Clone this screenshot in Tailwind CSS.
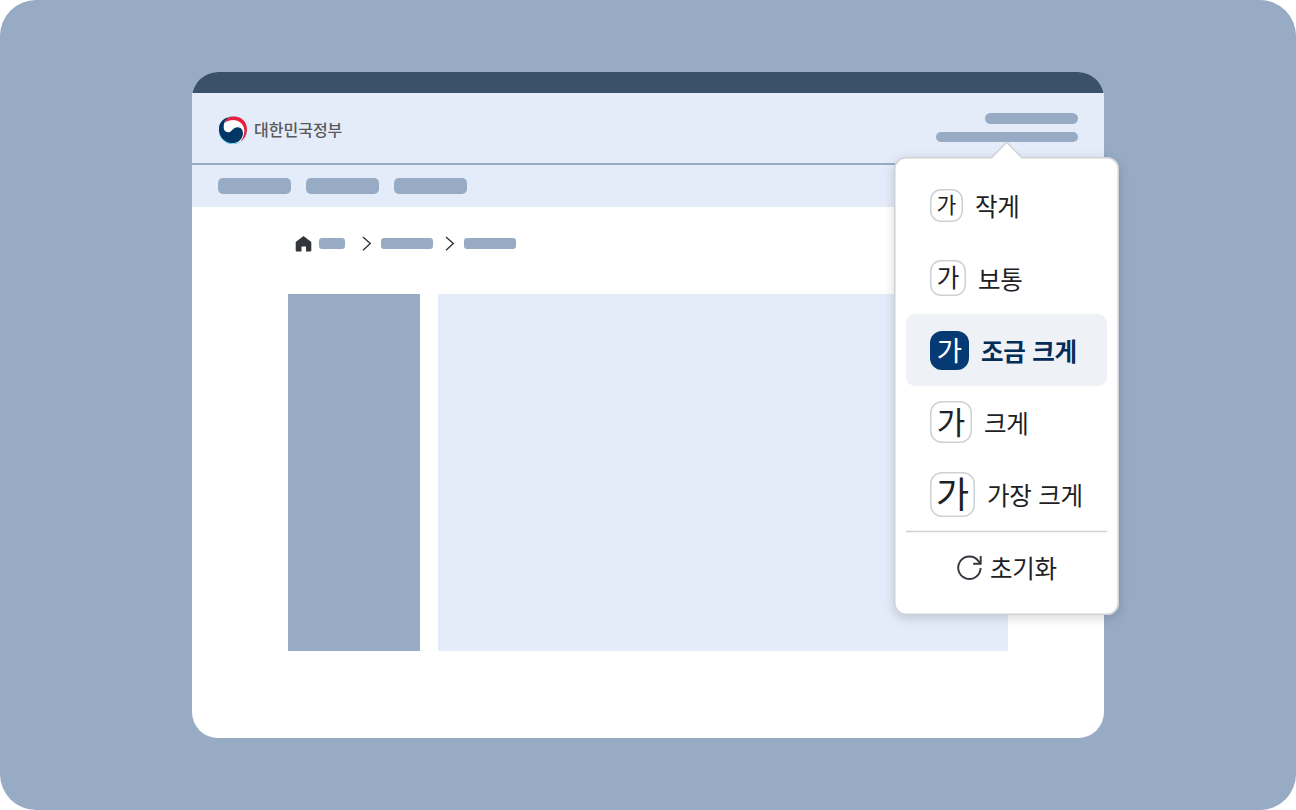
<!DOCTYPE html>
<html lang="ko">
<head>
<meta charset="utf-8">
<title>글자 크기 설정</title>
<script src="https://cdn.jsdelivr.net/npm/@tailwindcss/browser@4"></script>
</head>
<body class="bg-white font-['Noto_Sans_CJK_KR',sans-serif] text-[#1e2124]">
<div class="relative h-[810px] w-[1296px] overflow-hidden rounded-[36px] bg-[#98abc5] pt-18">
  <main class="mx-auto flex h-[666px] w-[912px] flex-col overflow-hidden rounded-[26px] bg-white">
    <div class="h-[21px] shrink-0 bg-[#3a506b]"></div>
    <header class="flex h-[72px] shrink-0 items-start justify-between border-b-2 border-[#98abc5] bg-[#e4ebf9] px-[26px]">
      <div class="flex items-center gap-[7px] pt-[22px]">
        <svg class="size-[29px]" viewBox="0 0 29 29">
          <circle cx="14.900" cy="15.200" r="14" fill="#32b4df"/>
          <circle cx="15.500" cy="15" r="13.400" fill="#fff"/>
          <path d="M8 4C15-1 29 1.500 29 15 28.700 20 26 24.500 22.500 26.500 27.500 20 27.500 12 23 8 18.500 4.300 12 4 7 8Z" fill="#e6213f"/>
          <path d="M10 2.600C2 5-.5 12 1.800 19 5 27.500 14 30 20.500 26.500 25.800 23 26.300 15.500 22.500 13 19 11 15.500 13.500 13.500 15.700 11 18.500 6.500 17.500 5.800 13.500 5.300 9.500 6.500 6 10 2.600Z" fill="#003764"/>
        </svg>
        <span class="text-[16px] font-medium leading-[24px] text-[#58595b] -mt-[2px]">대한민국정부</span>
      </div>
      <div class="flex flex-col items-end gap-2 pt-[20px]">
        <i class="h-[10.500px] w-[93px] rounded-full bg-[#98abc5]"></i>
        <i class="h-[10.500px] w-[142.500px] rounded-full bg-[#98abc5]"></i>
      </div>
    </header>
    <nav class="flex h-[42px] shrink-0 items-center gap-[15.500px] bg-[#e4ebf9] px-[26px]">
      <i class="h-[15.500px] w-[72.500px] rounded-[5px] bg-[#98abc5]"></i>
      <i class="h-[15.500px] w-[72.500px] rounded-[5px] bg-[#98abc5]"></i>
      <i class="h-[15.500px] w-[72.500px] rounded-[5px] bg-[#98abc5]"></i>
    </nav>
    <div class="flex h-[87px] shrink-0 items-start pl-[103px] pt-[28px]">
      <svg class="size-[17px]" viewBox="0 0 17 17"><path d="M8.500 1 16.300 7V15.500Q16.300 16.500 15.300 16.500H11V11.500H6.500V16.500H1.700Q.7 16.500.7 15.500V7Z" fill="#33363d"/></svg>
      <i class="ml-[7px] mt-[3px] h-[10.500px] w-[26px] rounded-[3px] bg-[#98abc5]"></i>
      <svg class="ml-[16px] mt-[1px] h-[15px] w-[12px]" viewBox="0 0 12 15" fill="none" stroke="#33363d" stroke-width="1.400"><path d="m2 1 7.300 6.600L2 14.200"/></svg>
      <i class="ml-[8px] mt-[3px] h-[10.500px] w-[52px] rounded-[3px] bg-[#98abc5]"></i>
      <svg class="ml-[11px] mt-[1px] h-[15px] w-[12px]" viewBox="0 0 12 15" fill="none" stroke="#33363d" stroke-width="1.400"><path d="m2 1 7.300 6.600L2 14.200"/></svg>
      <i class="ml-[8px] mt-[3px] h-[10.500px] w-[52px] rounded-[3px] bg-[#98abc5]"></i>
    </div>
    <section class="flex h-[357px] shrink-0 gap-[18px] px-24">
      <div class="w-[132px] bg-[#98abc5]"></div>
      <div class="flex-1 bg-[#e4ebf9]"></div>
    </section>
  </main>

  <div class="absolute left-[894px] top-[157px] h-[458px] w-[225px] rounded-[12px] bg-white px-[12px] pt-[13px] text-[24.500px] leading-[36px] tracking-[-0.250px] shadow-[inset_0_0_0_1.500px_#cdd1d5,0_3px_12px_rgba(0,0,0,0.16)]">
    <svg class="absolute left-[96px] -top-[16px] h-[18px] w-[34px]" viewBox="0 0 34 18"><path d="M1.500 16.500 16.700 1.200 32 16.500V18H1.500Z" fill="#fff"/><path d="M1.200 17 16.700 1.200 32.200 17" fill="none" stroke="#cdd1d5" stroke-width="1.500"/></svg>
    <div class="flex h-18 items-center gap-3 pl-6"><span class="flex size-[33px] items-center justify-center rounded-[11px] pb-1 text-[21.500px] tracking-normal shadow-[inset_0_0_0_1.500px_#cdd1d5] -mt-px">가</span><span>작게</span></div>
    <div class="flex h-18 items-center gap-3 pl-6"><span class="flex size-[36px] items-center justify-center rounded-[11px] pb-[2px] text-[24.500px] tracking-normal shadow-[inset_0_0_0_1.500px_#cdd1d5]">가</span><span class="pt-[2px]">보통</span></div>
    <div class="flex h-18 items-center gap-3 rounded-[9px] bg-[#eef2f7] pl-6 font-bold text-[#052b57]"><span class="flex size-[39px] items-center justify-center rounded-[12px] bg-[#063a74] pb-[3px] text-[27.500px] font-normal tracking-normal text-white">가</span><span class="pt-[2px]">조금 크게</span></div>
    <div class="flex h-18 items-center gap-3 pl-6"><span class="flex size-[42px] items-center justify-center rounded-[12px] pb-[3px] text-[31px] tracking-normal shadow-[inset_0_0_0_1.500px_#cdd1d5]">가</span><span class="pt-[2px]">크게</span></div>
    <div class="flex h-18 items-center gap-3 pl-6"><span class="flex size-[45px] items-center justify-center rounded-[12px] pb-1 text-[36px] tracking-normal shadow-[inset_0_0_0_1.500px_#cdd1d5]">가</span><span class="pt-[2px]">가장 크게</span></div>
    <svg class="block h-[3px] w-[201px]" viewBox="0 0 201 3"><rect y=".75" width="201" height="1.500" fill="#cdd1d5"/></svg>
    <div class="flex h-[69px] items-center gap-[7px] pl-[50px]">
      <svg class="-mt-px size-[27px]" viewBox="0 0 27 27" fill="none" stroke="#33363d" stroke-width="1.900"><path d="M24.600 14A11.200 11.200 0 1 1 22.500 7.200L24.500 9.500M24.700 2V9.700H17.200"/></svg>
      <span>초기화</span>
    </div>
  </div>
</div>
</body>
</html>
